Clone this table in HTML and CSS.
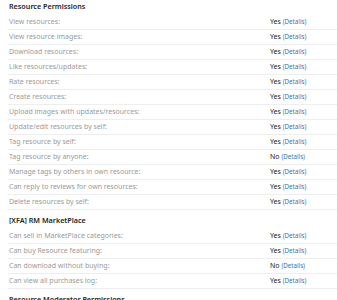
FILE: index.html
```html
<!DOCTYPE html>
<html>
<head>
<meta charset="utf-8">
<link rel="stylesheet" href="styles.css">
</head>
<body>
<div class="page">
  <h3 class="section-title">Resource Permissions</h3>
  <ul class="perm-list">
    <li class="perm-row"><span class="label">View resources:</span><span class="value">Yes <a class="details">(Details)</a></span></li>
    <li class="perm-row"><span class="label">View resource images:</span><span class="value">Yes <a class="details">(Details)</a></span></li>
    <li class="perm-row"><span class="label">Download resources:</span><span class="value">Yes <a class="details">(Details)</a></span></li>
    <li class="perm-row"><span class="label">Like resources/updates:</span><span class="value">Yes <a class="details">(Details)</a></span></li>
    <li class="perm-row"><span class="label">Rate resources:</span><span class="value">Yes <a class="details">(Details)</a></span></li>
    <li class="perm-row"><span class="label">Create resources:</span><span class="value">Yes <a class="details">(Details)</a></span></li>
    <li class="perm-row"><span class="label">Upload images with updates/resources:</span><span class="value">Yes <a class="details">(Details)</a></span></li>
    <li class="perm-row"><span class="label">Update/edit resources by self:</span><span class="value">Yes <a class="details">(Details)</a></span></li>
    <li class="perm-row"><span class="label">Tag resource by self:</span><span class="value">Yes <a class="details">(Details)</a></span></li>
    <li class="perm-row"><span class="label">Tag resource by anyone:</span><span class="value">No <a class="details">(Details)</a></span></li>
    <li class="perm-row"><span class="label">Manage tags by others in own resource:</span><span class="value">Yes <a class="details">(Details)</a></span></li>
    <li class="perm-row"><span class="label">Can reply to reviews for own resources:</span><span class="value">Yes <a class="details">(Details)</a></span></li>
    <li class="perm-row"><span class="label">Delete resources by self:</span><span class="value">Yes <a class="details">(Details)</a></span></li>
  </ul>
  <h3 class="section-title">[XFA] RM MarketPlace</h3>
  <ul class="perm-list">
    <li class="perm-row"><span class="label">Can sell in MarketPlace categories:</span><span class="value">Yes <a class="details">(Details)</a></span></li>
    <li class="perm-row"><span class="label">Can buy Resource featuring:</span><span class="value">Yes <a class="details">(Details)</a></span></li>
    <li class="perm-row"><span class="label">Can download without buying:</span><span class="value">No <a class="details">(Details)</a></span></li>
    <li class="perm-row"><span class="label">Can view all purchases log:</span><span class="value">Yes <a class="details">(Details)</a></span></li>
  </ul>
  <h3 class="section-title">Resource Moderator Permissions</h3>
</div>
</body>
</html>
```
FILE: styles.css
```css
html, body {
  margin: 0;
  padding: 0;
  background: #fff;
}
body {
  font-family: "Noto Sans", "DejaVu Sans", sans-serif;
  font-size: 7px;
  color: #9a9a9a;
}
.page {
  padding: 0 0 0 8px;
}
.section-title {
  margin: 0;
  height: 12px;
  line-height: 12px;
  padding: 0 0 3px 1px;
  font-size: 7.2px;
  font-weight: 600;
  color: #1e1e1e;
}
.perm-list {
  list-style: none;
  margin: 0 0 4px 0;
  padding: 0;
}
.perm-row {
  display: flex;
  height: 14px;
  line-height: 14px;
  border-bottom: 1px solid #eeeeee;
}
.label {
  flex: 0 0 261px;
  padding-left: 1px;
}
.value {
  color: #222;
}
.details {
  color: #3a75ad;
  font-size: 6.2px;
}
```
